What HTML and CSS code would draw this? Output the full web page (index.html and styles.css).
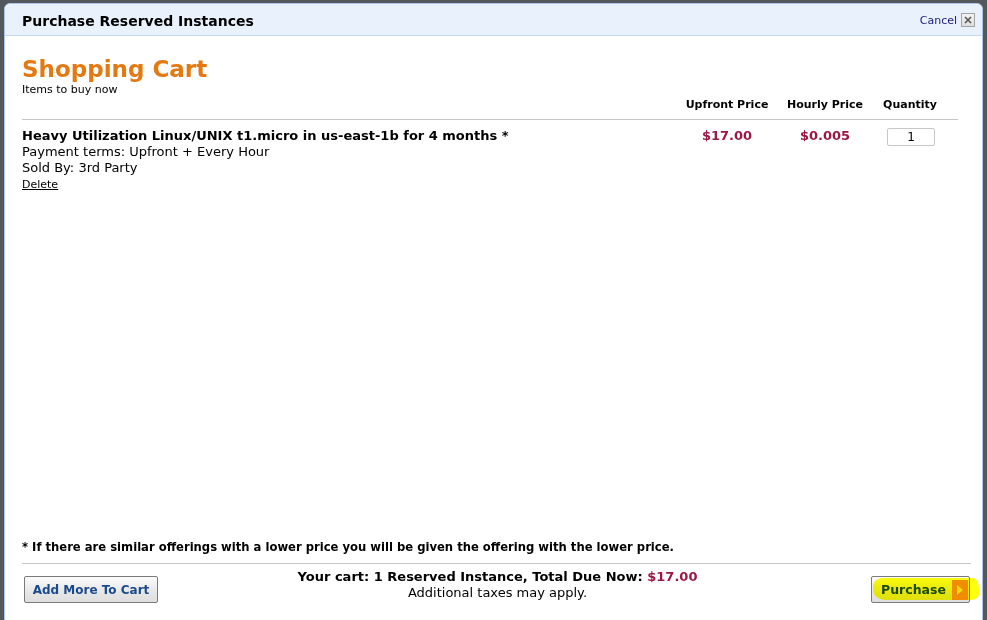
FILE: index.html
```html
<!DOCTYPE html>
<html>
<head>
<meta charset="utf-8">
<link rel="stylesheet" href="styles.css">
</head>
<body>
<div class="dialog">
  <div class="dlg-header">
    <div class="dlg-title">Purchase Reserved Instances</div>
    <div class="cancel">
      <span class="cancel-text">Cancel</span>
      <span class="close-box">
        <svg width="8" height="8" viewBox="0 0 8 8"><path d="M1 1 L7 7 M7 1 L1 7" stroke="#555" stroke-width="1.6" fill="none"/></svg>
      </span>
    </div>
  </div>
  <div class="dlg-body">
    <div class="cart-main">
      <h1 class="cart-title">Shopping Cart</h1>
      <div class="subtitle">Items to buy now</div>
      <div class="cart-table">
        <div class="row head">
          <div class="c-desc"></div>
          <div class="c-num">Upfront Price</div>
          <div class="c-num">Hourly Price</div>
          <div class="c-num">Quantity</div>
        </div>
        <div class="row item">
          <div class="c-desc">
            <div class="item-name">Heavy Utilization Linux/UNIX t1.micro in us-east-1b for 4 months *</div>
            <div class="item-line">Payment terms: Upfront + Every Hour</div>
            <div class="item-line">Sold By: 3rd Party</div>
            <a class="delete" href="#">Delete</a>
          </div>
          <div class="c-num price">$17.00</div>
          <div class="c-num price">$0.005</div>
          <div class="c-num"><input class="qty" type="text" value="1"></div>
        </div>
      </div>
    </div>
    <div class="footnote">* If there are similar offerings with a lower price you will be given the offering with the lower price.</div>
    <div class="dlg-footer">
      <div class="f-left"><button class="btn">Add More To Cart</button></div>
      <div class="summary">
        <div class="summary-main">Your cart: 1 Reserved Instance, Total Due Now: <span class="price">$17.00</span></div>
        <div class="summary-sub">Additional taxes may apply.</div>
      </div>
      <div class="f-right">
        <div class="purchase-wrap">
          <button class="btn btn-purchase">Purchase <span class="arrow-box"><svg width="10" height="12" viewBox="0 0 10 12"><path d="M2 1 L8 6 L2 11 Z" fill="#ffd966"/></svg></span></button>
          <div class="highlight"></div>
        </div>
      </div>
    </div>
  </div>
</div>
</body>
</html>
```

FILE: styles.css
```css
html, body {
  margin: 0;
  padding: 0;
}
body {
  width: 987px;
  height: 620px;
  overflow: hidden;
  background: #54585d;
  font-family: "DejaVu Sans", Verdana, sans-serif;
  color: #000;
}
.dialog {
  margin: 3px 0 0 4px;
  width: 977px;
  height: 640px;
  background: #fff;
  border: 1px solid #a9c6e6;
  border-radius: 6px 6px 0 0;
  display: flex;
  flex-direction: column;
}
.dlg-header {
  height: 31px;
  background: #e9f1fc;
  border-bottom: 1px solid #c3d7ee;
  border-radius: 6px 6px 0 0;
  display: flex;
  align-items: center;
  justify-content: space-between;
  padding: 0 7px 0 17px;
}
.dlg-title {
  font-weight: bold;
  font-size: 14px;
  padding-top: 2px;
}
.cancel {
  display: flex;
  align-items: center;
  gap: 4px;
}
.cancel-text {
  font-size: 11px;
  color: #1c1c7a;
  padding-top: 2px;
}
.close-box {
  width: 12px;
  height: 12px;
  border: 1px solid #a3a3a3;
  background: linear-gradient(#f4f4f4, #dcdcdc);
  display: flex;
  align-items: center;
  justify-content: center;
}
.dlg-body {
  flex: 1;
  display: flex;
  flex-direction: column;
  padding: 0 11px 0 17px;
}
.cart-main {
  flex: 0 0 504px;
}
.cart-title {
  margin: 19px 0 0 0;
  font-size: 23px;
  line-height: 28px;
  color: #e47911;
  font-weight: bold;
}
.subtitle {
  font-size: 11px;
  line-height: 13px;
  margin-top: 0;
}
.cart-table {
  margin-right: 13px;
}
.row {
  display: grid;
  grid-template-columns: 1fr 100px 96px 74px;
  padding-right: 11px;
}
.row.head {
  margin-top: 2px;
  font-size: 11px;
  font-weight: bold;
  line-height: 14px;
  padding-bottom: 7px;
  border-bottom: 1px solid #c4c4c4;
}
.c-num {
  text-align: center;
}
.row.item {
  padding-top: 7px;
  font-size: 13px;
}
.item-name {
  font-weight: bold;
  line-height: 17px;
}
.item-line {
  line-height: 16px;
}
.delete {
  display: inline-block;
  margin-top: 1px;
  font-size: 11px;
  color: #000;
  text-decoration: underline;
  line-height: 16px;
}
.price {
  color: #9c1646;
  font-weight: bold;
}
.row.item .price {
  line-height: 17px;
}
.qty {
  width: 46px;
  height: 16px;
  box-sizing: content-box;
  padding: 0;
  margin: 1px 0 0 2px;
  border: 1px solid #c8c8c8;
  border-radius: 2px;
  font-family: "DejaVu Sans", Verdana, sans-serif;
  font-size: 12px;
  text-align: center;
}
.footnote {
  font-size: 11.6px;
  font-weight: bold;
  line-height: 14px;
  padding-bottom: 9px;
  border-bottom: 1px solid #c8c8c8;
}
.dlg-footer {
  display: grid;
  grid-template-columns: 1fr auto 1fr;
  align-items: start;
  padding: 7px 0 0 2px;
}
.f-right {
  display: flex;
  justify-content: flex-end;
}
.btn {
  height: 27px;
  border: 1px solid #7a7a7a;
  border-radius: 2px;
  background: linear-gradient(#fbfbfb, #e6e6e6 60%, #dedede);
  font-family: "DejaVu Sans", Verdana, sans-serif;
  font-weight: bold;
  font-size: 12px;
  color: #1b4a8a;
  padding: 0 4px;
  margin-top: 5px;
  white-space: nowrap;
}
.f-left .btn {
  width: 134px;
}
.summary {
  text-align: center;
  font-size: 13px;
  line-height: 16px;
  margin-top: -2px;
}
.summary-main {
  font-weight: bold;
}
.purchase-wrap {
  position: relative;
  margin-right: 1px;
}
.btn-purchase {
  width: 99px;
  font-size: 12.5px;
  display: flex;
  align-items: center;
  justify-content: space-between;
  padding: 0 1px 0 9px;
}
.arrow-box {
  width: 16px;
  height: 20px;
  background: #f08c00;
  display: flex;
  align-items: center;
  justify-content: center;
}
.highlight {
  position: absolute;
  left: 2px;
  top: 7px;
  width: 106px;
  height: 22px;
  background: #ffff00;
  mix-blend-mode: multiply;
  border-radius: 10px 6px 8px 12px / 8px 10px 6px 10px;
  opacity: 0.95;
}
```
